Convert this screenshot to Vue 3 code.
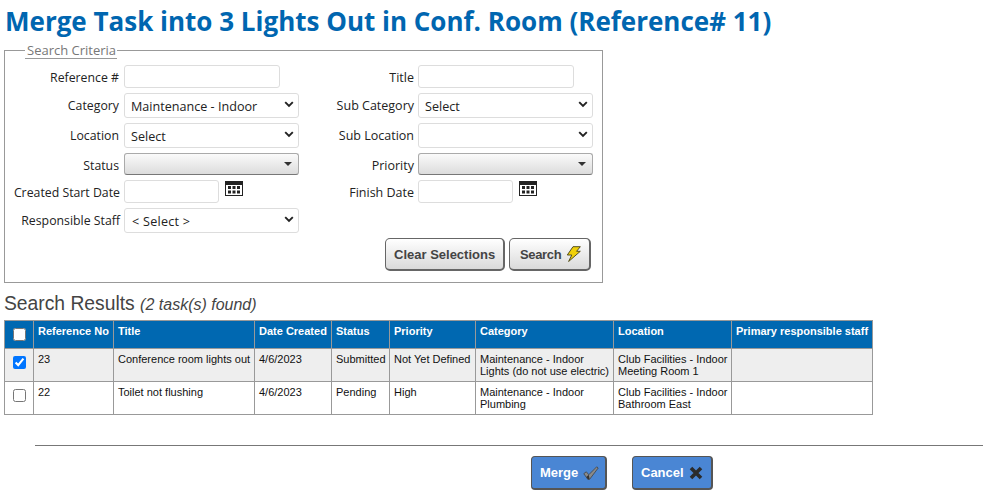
<script setup>
const rows = [
  { checked: true, id: '23', title: 'Conference room lights out', date: '4/6/2023', status: 'Submitted', priority: 'Not Yet Defined', cat: ['Maintenance - Indoor', 'Lights (do not use electric)'], loc: ['Club Facilities - Indoor', 'Meeting Room 1'] },
  { checked: false, id: '22', title: 'Toilet not flushing', date: '4/6/2023', status: 'Pending', priority: 'High', cat: ['Maintenance - Indoor', 'Plumbing'], loc: ['Club Facilities - Indoor', 'Bathroom East'] }
]
const cols = [29, 80, 141, 77, 58, 86, 138, 118, 141]
</script>

<template>
  <div class="page">
    <h1 class="title">Merge Task into 3 Lights Out in Conf. Room (Reference# 11)</h1>

    <fieldset class="criteria">
      <legend>Search Criteria</legend>
      <div class="form">
        <label class="low">Reference #</label>
        <div><input class="text" type="text" /></div>
        <label class="r low">Title</label>
        <div><input class="text" type="text" /></div>

        <label>Category</label>
        <div class="sel"><select><option>Maintenance - Indoor</option></select><svg class="chev" viewBox="0 0 10 7"><path d="M1.2 1.2 5 5l3.8-3.8" /></svg></div>
        <label class="r">Sub Category</label>
        <div class="sel"><select><option>Select</option></select><svg class="chev" viewBox="0 0 10 7"><path d="M1.2 1.2 5 5l3.8-3.8" /></svg></div>

        <label>Location</label>
        <div class="sel"><select><option>Select</option></select><svg class="chev" viewBox="0 0 10 7"><path d="M1.2 1.2 5 5l3.8-3.8" /></svg></div>
        <label class="r">Sub Location</label>
        <div class="sel"><select><option></option></select><svg class="chev" viewBox="0 0 10 7"><path d="M1.2 1.2 5 5l3.8-3.8" /></svg></div>

        <label class="low">Status</label>
        <div class="drop"><i></i></div>
        <label class="r low">Priority</label>
        <div class="drop"><i></i></div>

        <label class="w low">Created Start Date</label>
        <div class="date">
          <input class="text short" type="text" />
          <svg class="cal" viewBox="0 0 18 15"><path fill="#222" d="M0 0h18v15H0z" /><path fill="#fff" d="M1 4h16v10H1z" /><path fill="#222" d="M3 5h3v3H3zM7.500 5h3v3h-3zM12 5h3v3h-3zM3 9.500h3v3H3zM7.500 9.500h3v3h-3zM12 9.500h3v3h-3z" /></svg>
        </div>
        <label class="r low">Finish Date</label>
        <div class="date">
          <input class="text short" type="text" />
          <svg class="cal" viewBox="0 0 18 15"><path fill="#222" d="M0 0h18v15H0z" /><path fill="#fff" d="M1 4h16v10H1z" /><path fill="#222" d="M3 5h3v3H3zM7.500 5h3v3h-3zM12 5h3v3h-3zM3 9.500h3v3H3zM7.500 9.500h3v3h-3zM12 9.500h3v3h-3z" /></svg>
        </div>

        <label class="w">Responsible Staff</label>
        <div class="sel"><select class="staff"><option>&lt; Select &gt;</option></select><svg class="chev" viewBox="0 0 10 7"><path d="M1.2 1.2 5 5l3.8-3.8" /></svg></div>
        <span></span><span></span>

        <div class="actions">
          <button class="btn clear" type="button">Clear Selections</button>
          <button class="btn search" type="button"><span class="tight">Search</span>
            <svg class="bolt" viewBox="0 0 15 16"><path fill="#f0d008" stroke="#55501f" stroke-width="1" stroke-linejoin="round" d="M7 .7h7.300L10.600 5.300h3.700L2.600 15.500 5.800 9H1.300z" /></svg>
          </button>
        </div>
      </div>
    </fieldset>

    <h2 class="results">Search Results <em>(2 task(s) found)</em></h2>

    <table class="grid">
      <colgroup><col v-for="(c, i) in cols" :key="i" :style="{ width: c + 'px' }" /></colgroup>
      <thead>
        <tr>
          <th class="chk"><input type="checkbox" /></th>
          <th>Reference No</th><th>Title</th><th>Date Created</th><th>Status</th><th>Priority</th><th>Category</th><th>Location</th><th>Primary responsible staff</th>
        </tr>
      </thead>
      <tbody>
        <tr v-for="r in rows" :key="r.id" :class="{ alt: r.checked }">
          <td class="chk"><input type="checkbox" :checked="r.checked" /></td>
          <td>{{ r.id }}</td>
          <td>{{ r.title }}</td>
          <td>{{ r.date }}</td>
          <td>{{ r.status }}</td>
          <td>{{ r.priority }}</td>
          <td>{{ r.cat[0] }}<br />{{ r.cat[1] }}</td>
          <td>{{ r.loc[0] }}<br />{{ r.loc[1] }}</td>
          <td></td>
        </tr>
      </tbody>
    </table>

    <div class="rule"></div>

    <div class="footer">
      <button class="blue merge" type="button">Merge
        <svg class="tick" viewBox="0 0 16 14"><path fill="#8a8a8a" stroke="#3a3a3a" stroke-width=".7" stroke-linejoin="round" d="M.8 7.700 3.300 5.800 5.800 8.700 13.700.8 15.200 2 6.600 13.300H4.800z" /><path fill="#333" d="M3.500 10.800 5.800 8.700 6.600 13.300H4.800z" /></svg>
      </button>
      <button class="blue cancel" type="button">Cancel
        <svg class="cross" viewBox="0 0 14 14"><path fill="none" stroke="#2b2b2b" stroke-width="3.600" d="M2 2l10 10M12 2 2 12" /></svg>
      </button>
    </div>
  </div>
</template>

<style>
html, body { margin: 0; background: #fff; }
</style>

<style scoped>
.page { width: 983px; height: 500px; overflow: hidden; font-family: "Open Sans", sans-serif; color: #222; box-sizing: border-box; }
.title { margin: 0; padding: 3px 0 0 5px; height: 41px; box-sizing: border-box; font-size: 26px; line-height: 36px; font-weight: 700; color: #0066b0; white-space: nowrap; }
.criteria { margin: 0 0 0 4px; padding: 0 9px 10px 0; width: 599px; height: 242px; box-sizing: border-box; border: 1px solid #999; min-inline-size: 0; }
.criteria legend { margin-left: 20px; padding: 0 1px 0 2px; height: 18px; box-sizing: border-box; font-size: 13px; line-height: 19px; color: #777; border-bottom: 1px solid #999; }
.form { display: grid; grid-template-columns: 115px 175px 111px 175px; column-gap: 4px; row-gap: 5px; grid-template-rows: 23px 25px 25px 22px 23px 25px 33px; padding-top: 6px; font-size: 12.300px; }
label { align-self: center; text-align: right; padding-right: 1px; white-space: nowrap; color: #222; }
label.r { padding-right: 0; font-size: 12.500px; }
label.w { padding-right: 0; }
label.low { margin-top: 2px; }
.text { display: block; width: 156px; height: 23px; box-sizing: border-box; border: 1px solid #ddd; border-radius: 3px; background: #fff; outline: none; margin: 0; }
.text.short { width: 95px; }
.sel { position: relative; height: 25px; }
.sel select { appearance: none; display: block; width: 175px; height: 25px; margin: 0; box-sizing: border-box; border: 1px solid #ddd; border-radius: 3px; background: #fff; padding: 1px 0 0 6px; font-family: "Open Sans", sans-serif; font-size: 12.600px; color: #222; }
.sel select.staff { padding-left: 7px; letter-spacing: .25px; }
.chev { position: absolute; right: 5px; top: 8px; width: 10px; height: 7px; pointer-events: none; }
.chev path { fill: none; stroke: #222; stroke-width: 1.900; }
.drop { position: relative; height: 22px; box-sizing: border-box; border: 1px solid #aaa; border-bottom-color: #777; border-radius: 3px; background: linear-gradient(#fafafa, #dcdcdc); }
.drop i { position: absolute; right: 6px; top: 8px; width: 0; height: 0; border-left: 4px solid transparent; border-right: 4px solid transparent; border-top: 4px solid #333; }
.date { display: flex; align-items: flex-start; gap: 6px; }
.cal { display: block; width: 18px; height: 15px; margin-top: 1px; }
.actions { grid-column: 1 / -1; display: flex; justify-content: flex-end; gap: 4px; padding-right: 2px; }
.btn { display: inline-flex; align-items: center; justify-content: flex-start; gap: 4px; height: 33px; padding: 0 0 0 8px; box-sizing: border-box; border: 1px solid #666; border-right-width: 2px; border-bottom-width: 2px; border-radius: 5px; background: linear-gradient(#ffffff, #dadada); font-family: "Liberation Sans", sans-serif; font-size: 13px; font-weight: 700; color: #444; white-space: nowrap; margin: 0; }
.clear { width: 120px; }
.search { width: 82px; padding-left: 10px; }
.tight { letter-spacing: -.35px; margin-right: 1px; }
.bolt { width: 15px; height: 16px; }
.results { margin: 0; padding: 10px 0 0 4px; height: 37px; box-sizing: border-box; font-family: "Liberation Sans", sans-serif; font-size: 19.300px; line-height: 22px; font-weight: 400; color: #444; white-space: nowrap; }
.results em { font-size: 16px; font-style: italic; }
.grid { margin-left: 4px; border-collapse: collapse; table-layout: fixed; width: 869px; font-family: "Liberation Sans", sans-serif; font-size: 11px; line-height: 12px; color: #111; }
.grid th, .grid td { border: 1px solid #999; padding: 4px 4px 0; vertical-align: top; text-align: left; overflow: hidden; white-space: nowrap; box-sizing: border-box; }
.grid th { height: 28px; background: #0068b1; color: #fff; font-weight: 700; font-size: 11px; padding-top: 4px; padding-left: 4px; }
.grid td { height: 33px; }
.grid tr.alt td { background: #eee; }
.grid .chk { padding: 0; text-align: center; }
.grid .chk input { display: block; width: 13px; height: 13px; margin: 7px 0 0 8px; accent-color: #0075ff; }
.rule { margin: 30px 0 0 35px; height: 1px; background: #777; }
.footer { display: flex; padding: 10px 0 0 531px; gap: 25px; }
.blue { display: inline-flex; align-items: center; justify-content: flex-start; gap: 5px; height: 34px; box-sizing: border-box; padding: 0 0 0 8px; border: 1px solid #555; border-right-width: 2px; border-bottom-width: 2px; border-radius: 4px; background: #4a86d4; color: #fff; font-family: "Liberation Sans", sans-serif; font-size: 13px; font-weight: 700; margin: 0; }
.merge { width: 76px; }
.cancel { width: 81px; }
.tick { width: 16px; height: 14px; }
.cross { width: 14px; height: 14px; }
</style>
